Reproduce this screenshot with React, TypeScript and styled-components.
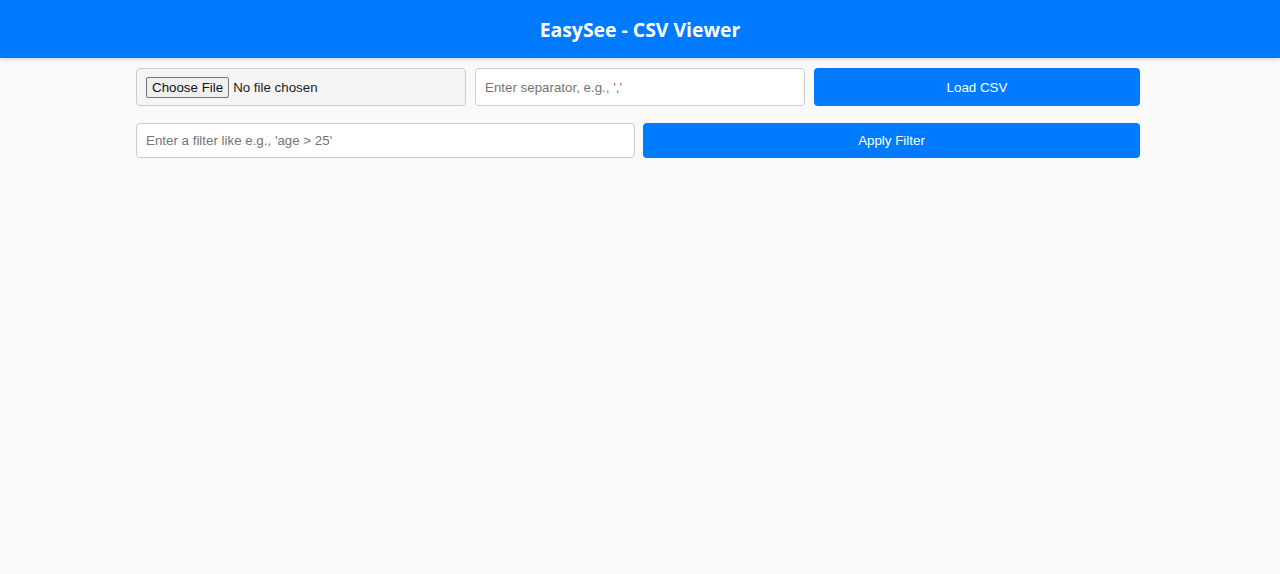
import React from "react";
import styled, { createGlobalStyle } from "styled-components";

const Global = createGlobalStyle`
  html, body { margin: 0; padding: 0; background: #f9f9f9; }
  body { font-family: "Liberation Sans", Arial, sans-serif; }
  * { box-sizing: border-box; }
`;

const Header = styled.header`
  height: 58px;
  background: #007bff;
  display: flex;
  align-items: center;
  justify-content: center;
  box-shadow: 0 2px 4px rgba(0, 0, 0, 0.12);
`;

const Title = styled.h1`
  margin: 0;
  color: #fff;
  font-family: "Open Sans", "Noto Sans", sans-serif;
  font-size: 19.4px;
  font-weight: 700;
`;

const Container = styled.main`
  width: 1004px;
  margin: 10px 0 0 136px;
  display: flex;
  flex-direction: column;
  gap: 17px;
`;

const Row = styled.div<{ $gap: number }>`
  display: flex;
  gap: ${(p) => p.$gap}px;
`;

const FileBox = styled.div<{ $w: number }>`
  flex: 0 0 ${(p) => p.$w}px;
  min-width: 0;
  height: 38px;
  border: 1px solid #ccc;
  border-radius: 4px;
  background: #f5f5f5;
  display: flex;
  align-items: center;
  padding: 0 9px;
  font-size: 13.33px;
  color: #222;
`;

const FileButton = styled.button`
  height: 21px;
  padding: 0 5px;
  font-family: "Liberation Sans", Arial, sans-serif;
  font-size: 13.33px;
  color: #111;
  background: #efefef;
  border: 1px solid #767676;
  border-radius: 2px;
  margin-right: 4px;
`;

const TextInput = styled.input<{ $h: number; $w: number }>`
  flex: 0 0 ${(p) => p.$w}px;
  min-width: 0;
  height: ${(p) => p.$h}px;
  border: 1px solid #ccc;
  border-radius: 4px;
  background: #fff;
  padding: 0 9px;
  font-family: "Liberation Sans", Arial, sans-serif;
  font-size: 13.33px;
  color: #222;
  &::placeholder { color: #757575; }
  outline: none;
`;

const Button = styled.button<{ $h: number }>`
  flex: 1 1 0;
  min-width: 0;
  height: ${(p) => p.$h}px;
  border: none;
  border-radius: 4px;
  background: #007bff;
  color: #fff;
  font-family: "Liberation Sans", Arial, sans-serif;
  font-size: 13.33px;
  cursor: pointer;
`;

export default function App() {
  return (
    <>
      <Global />
      <Header>
        <Title>EasySee - CSV Viewer</Title>
      </Header>
      <Container>
        <Row $gap={9}>
          <FileBox $w={330}>
            <FileButton>Choose File</FileButton>
            No file chosen
          </FileBox>
          <TextInput $h={38} $w={330} placeholder="Enter separator, e.g., ','" />
          <Button $h={38}>Load CSV</Button>
        </Row>
        <Row $gap={8}>
          <TextInput $h={35} $w={499} placeholder="Enter a filter like e.g., 'age > 25'" />
          <Button $h={35}>Apply Filter</Button>
        </Row>
      </Container>
    </>
  );
}
